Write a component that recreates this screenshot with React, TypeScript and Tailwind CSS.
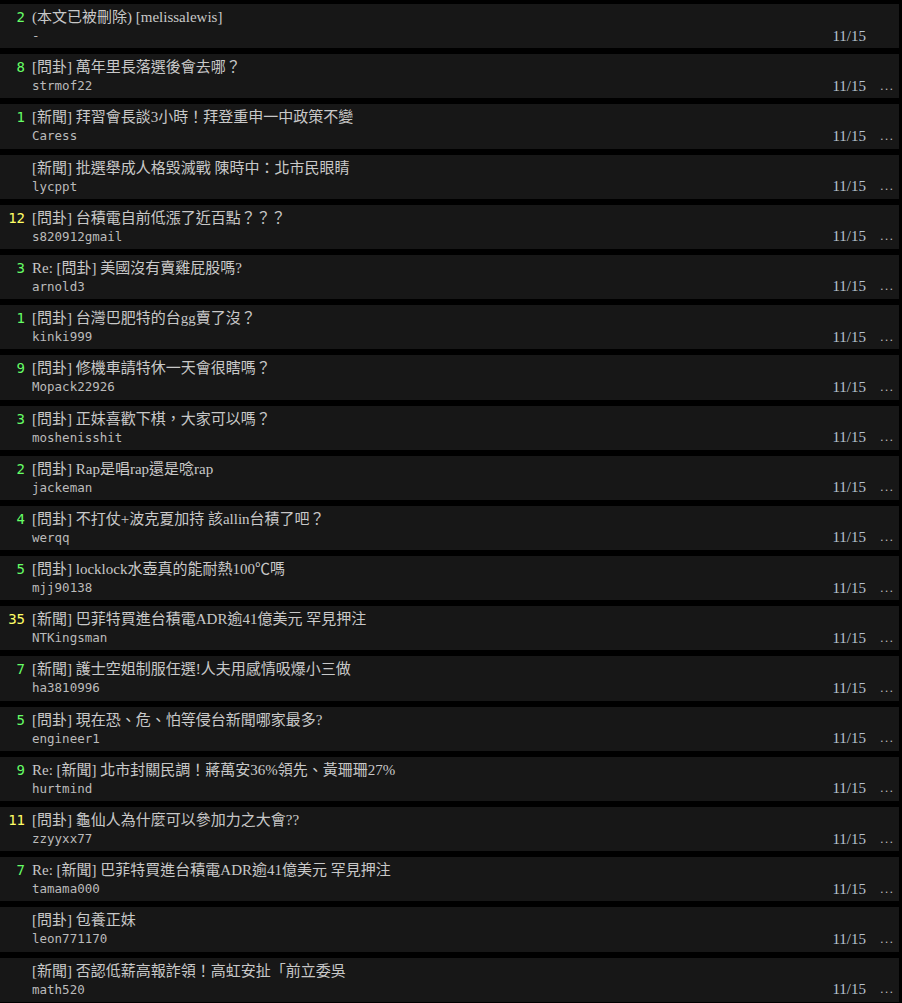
import React from "react";

type Row = { n: string; title: string; author: string; more: boolean };

const rows: Row[] = [
  { n: "2", title: "(本文已被刪除) [melissalewis]", author: "-", more: false },
  { n: "8", title: "[問卦] 萬年里長落選後會去哪？", author: "strmof22", more: true },
  { n: "1", title: "[新聞] 拜習會長談3小時！拜登重申一中政策不變", author: "Caress", more: true },
  { n: "", title: "[新聞] 批選舉成人格毀滅戰 陳時中：北市民眼睛", author: "lycppt", more: true },
  { n: "12", title: "[問卦] 台積電自前低漲了近百點？？？", author: "s820912gmail", more: true },
  { n: "3", title: "Re: [問卦] 美國沒有賣雞屁股嗎?", author: "arnold3", more: true },
  { n: "1", title: "[問卦] 台灣巴肥特的台gg賣了沒？", author: "kinki999", more: true },
  { n: "9", title: "[問卦] 修機車請特休一天會很瞎嗎？", author: "Mopack22926", more: true },
  { n: "3", title: "[問卦] 正妹喜歡下棋，大家可以嗎？", author: "moshenisshit", more: true },
  { n: "2", title: "[問卦] Rap是唱rap還是唸rap", author: "jackeman", more: true },
  { n: "4", title: "[問卦] 不打仗+波克夏加持 該allin台積了吧？", author: "werqq", more: true },
  { n: "5", title: "[問卦] locklock水壺真的能耐熱100℃嗎", author: "mjj90138", more: true },
  { n: "35", title: "[新聞] 巴菲特買進台積電ADR逾41億美元 罕見押注", author: "NTKingsman", more: true },
  { n: "7", title: "[新聞] 護士空姐制服任選!人夫用感情吸爆小三做", author: "ha3810996", more: true },
  { n: "5", title: "[問卦] 現在恐、危、怕等侵台新聞哪家最多?", author: "engineer1", more: true },
  { n: "9", title: "Re: [新聞] 北市封關民調！蔣萬安36%領先、黃珊珊27%", author: "hurtmind", more: true },
  { n: "11", title: "[問卦] 龜仙人為什麼可以參加力之大會??", author: "zzyyxx77", more: true },
  { n: "7", title: "Re: [新聞] 巴菲特買進台積電ADR逾41億美元 罕見押注", author: "tamama000", more: true },
  { n: "", title: "[問卦] 包養正妹", author: "leon771170", more: true },
  { n: "", title: "[新聞] 否認低薪高報詐領！高虹安扯「前立委吳", author: "math520", more: true },
];

export default function App() {
  return (
    <div className="min-h-[1003px] w-full bg-black pt-[4px]">
      <div className="w-[899px]">
        {rows.map((r, i) => {
          const big = r.n.length > 1;
          return (
            <div key={i} className="mb-[6px] flex h-[44.2px] bg-[#171717] pt-[4px]">
              <div
                className={`w-[25px] text-right text-[14px] leading-[18px] ${
                  big ? "text-[#ffff66]" : "text-[#66ff66]"
                }`}
                style={{ fontFamily: '"DejaVu Sans Mono", monospace' }}
              >
                {r.n}
              </div>
              <div className="ml-[7px] flex min-w-0 flex-1 flex-col">
                <div
                  className="h-[18px] whitespace-nowrap text-[15px] leading-[18px] text-[#c8c8c8]"
                  style={{ fontFamily: '"Liberation Serif", "Noto Sans CJK TC", serif' }}
                >
                  {r.title}
                </div>
                <div
                  className="h-[18px] whitespace-nowrap pt-[1px] text-[12.5px] leading-[18px] text-[#bbbbbb]"
                  style={{ fontFamily: '"DejaVu Sans Mono", monospace' }}
                >
                  {r.author}
                </div>
              </div>
              <div className="flex flex-col">
                <div className="h-[18px]" />
                <div className="flex h-[18px] items-center pt-[1px]">
                  <span
                    className="ml-[1px] text-[15px] leading-[18px] text-[#b7c3cf]"
                    style={{ fontFamily: '"Liberation Serif", serif' }}
                  >
                    11/15
                  </span>
                  <span
                    className="ml-[14px] w-[19px] text-[13px] leading-[18px] tracking-[1.2px] text-[#bbbbbb]"
                    style={{ fontFamily: '"Liberation Sans", sans-serif' }}
                  >
                    {r.more ? "..." : ""}
                  </span>
                </div>
              </div>
            </div>
          );
        })}
      </div>
    </div>
  );
}
